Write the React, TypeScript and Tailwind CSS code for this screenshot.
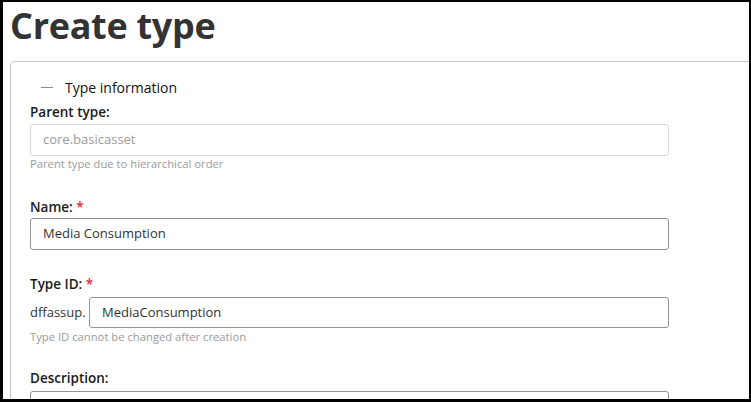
import React from "react";

const font = { fontFamily: '"Open Sans", "Noto Sans", sans-serif' };

function Label({ text, required }: { text: string; required?: boolean }) {
  return (
    <div className="text-[13.5px] leading-[18px] font-semibold text-[#1a1a1a]">
      {text}
      {required && <span className="text-[#e0283c] font-semibold"> *</span>}
    </div>
  );
}

export default function App() {
  return (
    <div
      className="w-[751px] h-[402px] overflow-hidden bg-white border-black border-t-2 border-l-[3px] border-r-2 border-b-[3px] box-border"
      style={font}
    >
      <div className="w-[900px] pl-[7px]">
        <h1 className="text-[36px] leading-[44px] h-[44px] font-bold text-[#333333] mt-[2px] tracking-[-0.3px]">
          Create type
        </h1>
        <div className="mt-[13px] border border-[#c6c6c6] rounded-[4px] pl-[19px] pr-[19px] pt-[15px] pb-10">
          <div className="flex items-center h-[20px]">
            <span className="w-[12px] h-[1px] bg-[#8a8a8a] ml-[11px]"></span>
            <span className="ml-[12px] text-[14px] text-[#111] font-medium">Type information</span>
          </div>
          <div className="w-[639px]">
            <div className="mt-[6px]">
              <Label text="Parent type:" />
              <div className="mt-[3px] h-[32px] border border-[#dadada] rounded-[3px] flex items-center pl-[12px] text-[13px] text-[#9b9b9b]">
                core.basicasset
              </div>
              <div className="mt-[1px] text-[11.25px] leading-[14px] text-[#9b9b9b]">
                Parent type due to hierarchical order
              </div>
            </div>
            <div className="mt-[27px]">
              <Label text="Name:" required />
              <div className="mt-[2px] h-[32px] border border-[#949494] rounded-[3px] flex items-center pl-[12px] text-[13px] text-[#333]">
                Media Consumption
              </div>
            </div>
            <div className="mt-[25px]">
              <Label text="Type ID:" required />
              <div className="mt-[4px] flex items-center">
                <span className="text-[13px] text-[#333] w-[59px]">dffassup.</span>
                <div className="flex-1 h-[31px] border border-[#949494] rounded-[3px] flex items-center pl-[12px] text-[13px] text-[#333]">
                  MediaConsumption
                </div>
              </div>
              <div className="mt-[2px] text-[11.25px] leading-[14px] text-[#9b9b9b]">
                Type ID cannot be changed after creation
              </div>
            </div>
            <div className="mt-[25px]">
              <Label text="Description:" />
              <div className="mt-[4px] h-[60px] border border-[#949494] rounded-[3px]"></div>
            </div>
          </div>
        </div>
      </div>
    </div>
  );
}
